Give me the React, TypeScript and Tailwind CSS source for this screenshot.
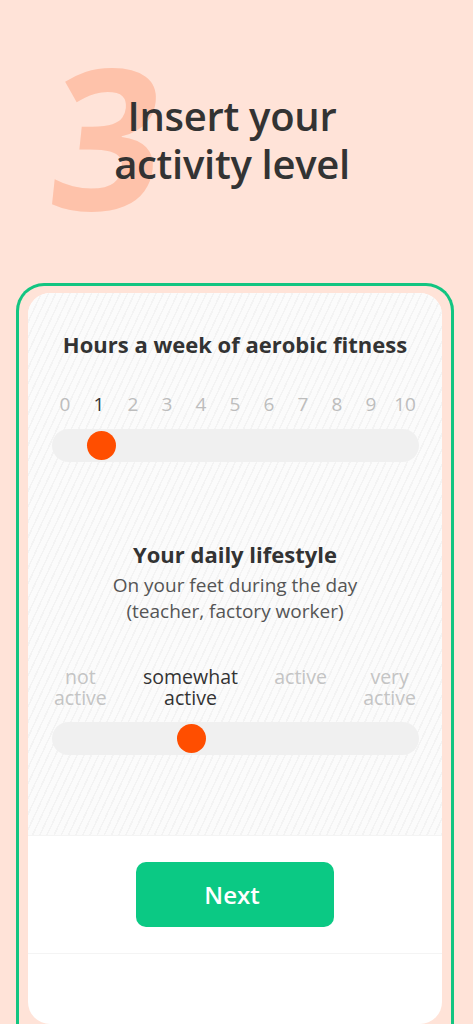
import React from "react";

const HOURS = ["0", "1", "2", "3", "4", "5", "6", "7", "8", "9", "10"];

const LIFESTYLE = [
  { top: "not", bottom: "active" },
  { top: "somewhat", bottom: "active" },
  { top: "active", bottom: "" },
  { top: "very", bottom: "active" },
];

function Track({ thumbLeft }: { thumbLeft: string }) {
  return (
    <div className="relative mx-auto h-[33px] w-[367px] rounded-full bg-[#f0f0f0]">
      <div
        className={`absolute top-[2px] h-[29px] w-[29px] rounded-full bg-[#ff4e00] ${thumbLeft}`}
      />
    </div>
  );
}

export default function App() {
  const selectedHour = 1;
  const selectedLifestyle = 1;

  return (
    <main
      className="h-[1024px] overflow-hidden bg-[#ffe3d8] text-[#333333]"
      style={{ fontFamily: '"Open Sans", "Noto Sans", sans-serif' }}
    >
      <header className="relative h-[283px]">
        <span className="absolute left-[52px] top-[36px] -skew-x-6 text-[196px] font-bold leading-none text-[#fec2aa] select-none">
          3
        </span>
        <h1 className="relative pt-[92px] pr-[9px] text-center text-[40px] font-semibold leading-[48px] tracking-[-0.3px]">
          Insert your
          <br />
          activity level
        </h1>
      </header>

      <section className="ml-[16px] w-[438px] rounded-t-[28px] border-[3px] border-b-0 border-[#12c581] px-[9px] pt-[7px]">
        <div className="h-[731px] overflow-hidden rounded-[22px] bg-white">
          <div className="h-[542px] bg-[repeating-linear-gradient(115deg,#fbfbfb_0px,#fbfbfb_5px,#f3f3f3_5px,#f3f3f3_6.5px)] pt-[36px]">
            <h2 className="text-center text-[22px] font-bold leading-[30px]">
              Hours a week of aerobic fitness
            </h2>

            <div className="mx-auto mt-[33px] grid w-[374px] grid-cols-11 text-center text-[19px] leading-[24px]">
              {HOURS.map((h, i) => (
                <span
                  key={h}
                  className={i === selectedHour ? "text-[#333333]" : "text-[#bdbdbd]"}
                >
                  {h}
                </span>
              ))}
            </div>

            <div className="mt-[13px]">
              <Track thumbLeft="left-[35px]" />
            </div>

            <h2 className="mt-[77px] text-center text-[22px] font-bold leading-[30px]">
              Your daily lifestyle
            </h2>
            <p className="mt-[3px] text-center text-[19px] leading-[26px] text-[#555555]">
              On your feet during the day
              <br />
              (teacher, factory worker)
            </p>

            <div className="mx-auto mt-[42px] flex w-[362px] justify-between text-center text-[19.5px] leading-[21px]">
              {LIFESTYLE.map((l, i) => (
                <div
                  key={l.top}
                  className={i === selectedLifestyle ? "text-[#333333]" : "text-[#c4c4c4]"}
                >
                  {l.top}
                  {l.bottom && (
                    <>
                      <br />
                      {l.bottom}
                    </>
                  )}
                </div>
              ))}
            </div>

            <div className="mt-[14px]">
              <Track thumbLeft="left-[125px]" />
            </div>
          </div>

          <div className="flex justify-center border-y border-[#f4f4f4] py-[26px]">
            <button
              type="button"
              className="h-[65px] w-[198px] rounded-[10px] bg-[#0bc984] pr-[6px] text-[24px] font-semibold text-white"
            >
              Next
            </button>
          </div>
        </div>
      </section>
    </main>
  );
}
